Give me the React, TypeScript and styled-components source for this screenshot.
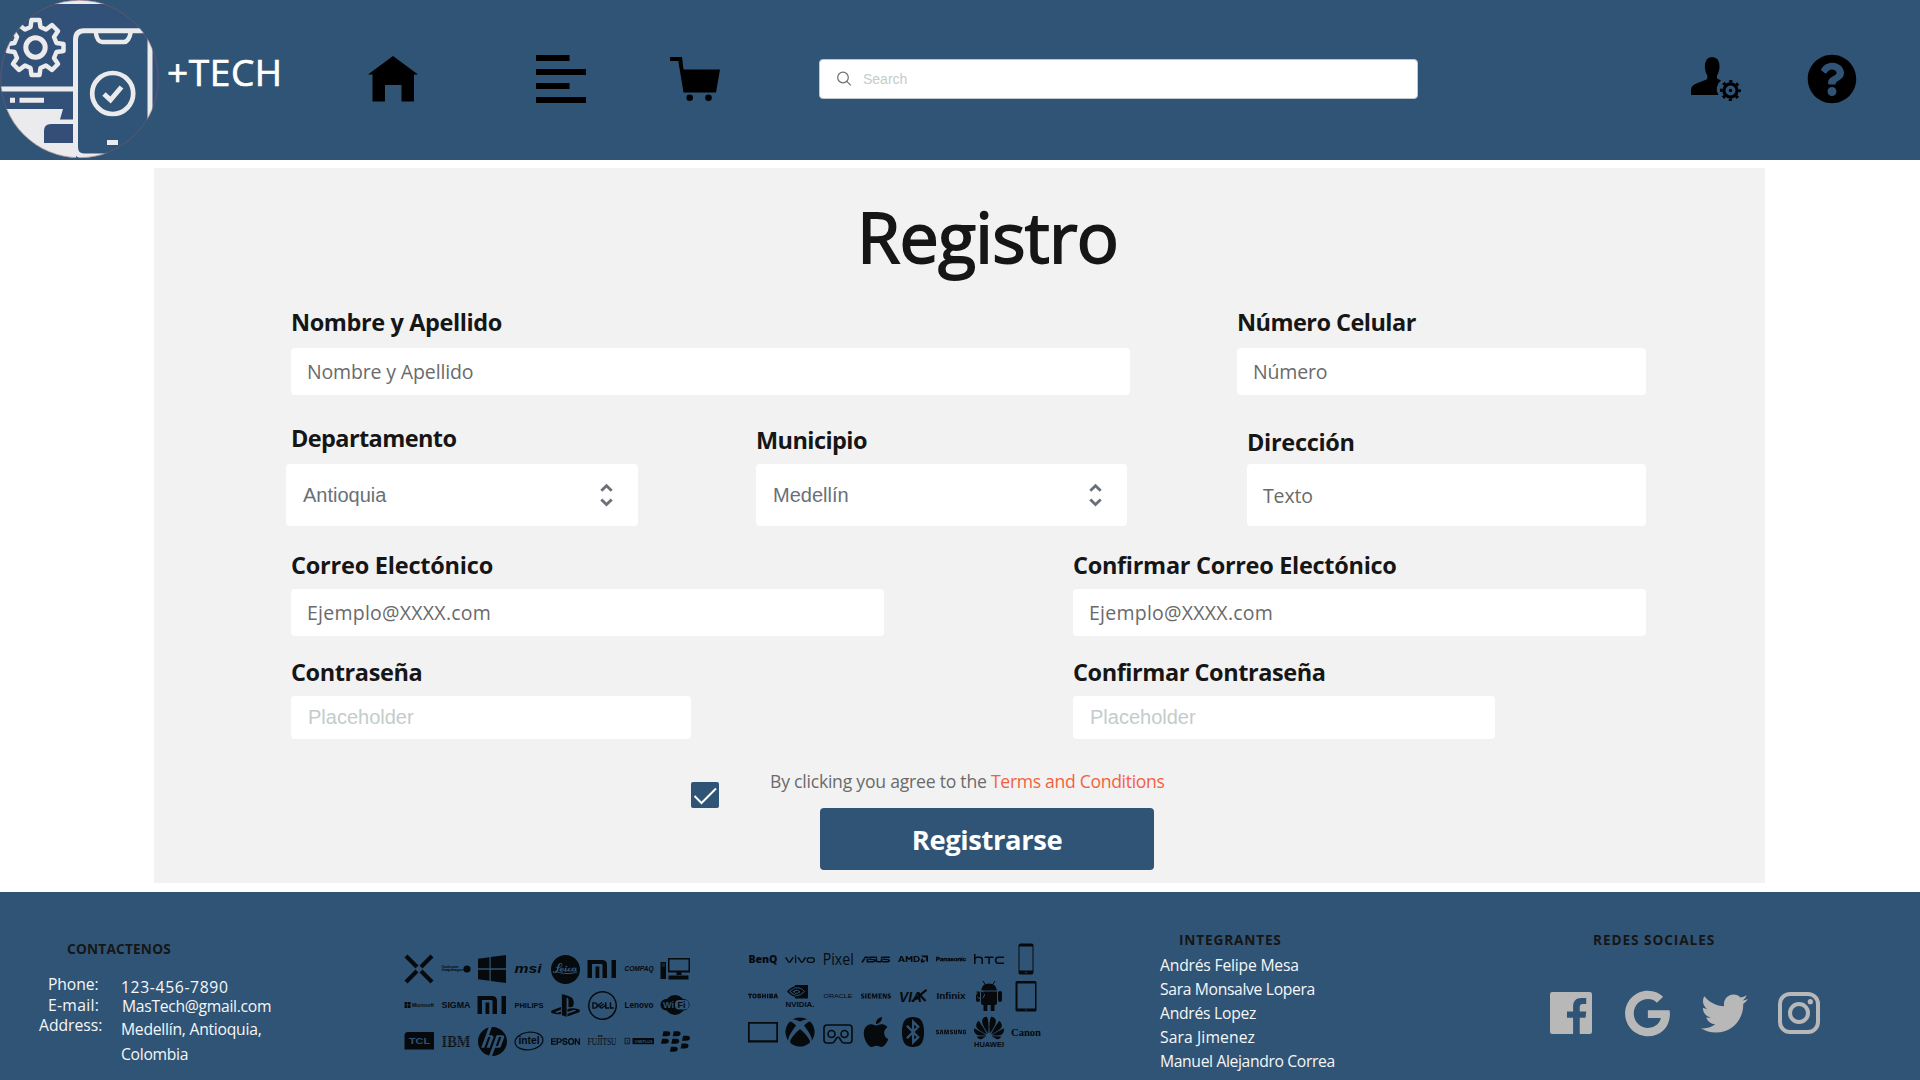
import React from 'react';
import styled, { createGlobalStyle } from 'styled-components';
import { FaWindows, FaXbox, FaQuestionCircle, FaTwitter, FaGoogle } from 'react-icons/fa';
import {
  SiDell, SiHp, SiHuawei, SiBlackberry, SiAsus, SiNvidia, SiPlaystation, SiApple, SiBluetooth,
  SiAmd, SiSamsung, SiEpson, SiVivo, SiPanasonic, SiHtc, SiToshiba, SiSiemens, SiLeica,
} from 'react-icons/si';

const blue = '#305475';
const sans = '"Open Sans", "Noto Sans", sans-serif';
const arial = '"Liberation Sans", Arial, sans-serif';

const GlobalStyle = createGlobalStyle`
  * { box-sizing: border-box; }
  body { margin: 0; background: #fff; font-family: ${sans}; color: #161616; }
`;

const Page = styled.div`
  display: flex;
  flex-direction: column;
  width: 1920px;
  height: 1080px;
  overflow: hidden;
`;

/* Header */

const Header = styled.header`
  display: flex;
  align-items: center;
  height: 160px;
  padding-bottom: 2px;
  background: ${blue};
`;

const Brand = styled.div`
  display: flex;
  align-items: center;
  width: 368px;
`;

const BrandName = styled.span`
  margin: 0 0 14px 7px;
  font-size: 37px;
  font-weight: 500;
  line-height: 48px;
  letter-spacing: 0.6px;
  color: #fff;
  -webkit-text-stroke: 0.7px #fff;
`;

const Nav = styled.nav`
  display: flex;
  align-items: center;
  width: 451px;
`;

const NavIcon = styled.svg<{ $after?: number }>`
  width: 50px;
  height: 50px;
  flex: none;
  margin-right: ${(p) => p.$after ?? 0}px;
`;

const SearchBox = styled.div`
  display: flex;
  align-items: center;
  gap: 11px;
  width: 599px;
  height: 40px;
  padding-left: 17px;
  border: 1px solid #c1c7cd;
  border-radius: 4px;
  background: #fff;
  font: 14px ${arial};
  color: #c3cccc;
`;

const Account = styled.div`
  display: flex;
  align-items: center;
  gap: 66px;
  margin-left: 273px;
  font-size: 50px;
  color: #000;
`;

/* Form */

const Panel = styled.form`
  width: 1611px;
  height: 715px;
  margin: 8px 0 9px 154px;
  padding-top: 20px;
  background: #f2f2f2;
`;

const Title = styled.h1`
  margin: 0;
  padding-left: 703px;
  font-size: 70px;
  font-weight: 500;
  line-height: 97px;
  height: 96px;
  letter-spacing: -0.75px;
  -webkit-text-stroke: 1.8px #161616;
`;

const Row = styled.div<{ $top: number; $indent?: number }>`
  display: flex;
  align-items: flex-end;
  margin-top: ${(p) => p.$top}px;
  padding-left: ${(p) => p.$indent ?? 137}px;
`;

const Field = styled.div<{ $width: number; $before?: number }>`
  width: ${(p) => p.$width}px;
  margin-left: ${(p) => p.$before ?? 0}px;
`;

const Label = styled.label<{ $gap: number; $ls: number; $shift?: number }>`
  display: block;
  margin: 0 0 ${(p) => p.$gap}px ${(p) => p.$shift ?? 0}px;
  font-size: 23.5px;
  font-weight: 700;
  line-height: 30px;
  letter-spacing: ${(p) => p.$ls}px;
  white-space: nowrap;
`;

const Box = styled.div<{ $height: number }>`
  display: flex;
  align-items: center;
  height: ${(p) => p.$height}px;
  padding-left: 16px;
  border-radius: 4px;
  background: #fff;
  font-size: 19.5px;
  letter-spacing: -0.15px;
  color: #6a6a6a;
`;

const EmailBox = styled(Box)`
  letter-spacing: 0.25px;
`;

const SelectBox = styled(Box)`
  justify-content: space-between;
  padding: 0 25px 0 17px;
  font: 20px ${arial};
  letter-spacing: 0;
  color: #697077;
`;

const PasswordBox = styled(Box)`
  padding-left: 17px;
  font: 20px ${arial};
  letter-spacing: 0;
  color: #c3cccc;
`;

const TermsRow = styled.div`
  display: flex;
  align-items: flex-start;
  height: 39px;
  margin-top: 30px;
  padding-left: 537px;
`;

const Check = styled.span`
  display: flex;
  width: 28px;
  height: 26px;
  margin: 13px 51px 0 0;
  border-radius: 2px;
  background: ${blue};
`;

const Terms = styled.span`
  font-size: 17.6px;
  line-height: 24px;
  letter-spacing: -0.23px;
  color: #6a6a6a;
  white-space: pre;
`;

const TermsLink = styled.a`
  letter-spacing: -0.32px;
  color: #f2613f;
`;

const Submit = styled.button`
  display: block;
  width: 334px;
  height: 62px;
  margin: 0 0 0 666px;
  padding: 0;
  border: 0;
  border-radius: 4px;
  background: ${blue};
  color: #fff;
  font: 700 27.4px ${sans};
  letter-spacing: -0.4px;
`;

/* Footer */

const Footer = styled.footer`
  display: flex;
  align-items: flex-start;
  height: 188px;
  background: ${blue};
`;

const Column = styled.section<{ $width: number; $top: number }>`
  flex: none;
  width: ${(p) => p.$width}px;
  padding-top: ${(p) => p.$top}px;
`;

const Heading = styled.h2<{ $indent: number; $ls: number }>`
  margin: 0;
  padding-left: ${(p) => p.$indent}px;
  font-size: 13.7px;
  font-weight: 700;
  line-height: 20px;
  letter-spacing: ${(p) => p.$ls}px;
`;

const Contact = styled.div`
  display: flex;
  margin-top: 15px;
`;

const Lines = styled.div<{ $width?: number; $top?: number }>`
  width: ${(p) => (p.$width ? `${p.$width}px` : 'auto')};
  padding-top: ${(p) => p.$top ?? 0}px;
`;

const Line = styled.p<{ $h: number; $indent?: number; $ls?: number }>`
  margin: 0;
  padding-left: ${(p) => p.$indent ?? 0}px;
  font-size: 15.7px;
  line-height: ${(p) => p.$h}px;
  letter-spacing: ${(p) => p.$ls ?? 0}px;
  color: #f6f7f8;
  white-space: nowrap;
`;

const BrandGrid = styled.div<{ $col: number; $row: number }>`
  display: grid;
  grid-template-columns: repeat(8, ${(p) => p.$col}px);
  grid-auto-rows: ${(p) => p.$row}px;
  place-items: center;
  color: #060a0d;
  font-size: 30px;
`;

const Mark = styled.svg`
  display: block;
  width: 30px;
  height: 30px;
  overflow: visible;
  fill: currentColor;
`;

const Socials = styled.div`
  display: flex;
  align-items: center;
  height: 48px;
  margin-top: 39px;
  color: #b8b8b8;
`;

const SocialIcon = styled.span<{ $size: number; $after: number }>`
  display: flex;
  margin-right: ${(p) => p.$after}px;
  font-size: ${(p) => p.$size}px;
`;

function BrandLogo() {
  return (
    <svg width="160" height="158" viewBox="0 0 160 158">
      <defs>
        <clipPath id="disc"><circle cx="79.5" cy="79" r="79" /></clipPath>
      </defs>
      <g clipPath="url(#disc)" fill="none" stroke="#ebebed" strokeWidth="5">
        <rect width="160" height="158" fill="#325178" stroke="none" />
        <rect width="160" height="4" fill="#ebebed" stroke="none" />
        <rect x="0" y="109" width="76" height="49" fill="#ebebed" stroke="none" />
        <path d="M63 109L60 119.500H74V109Z" fill="#344e78" stroke="none" />
        <path d="M51 124H74V143H44V131Q44 124 51 124Z" fill="#344e78" stroke="none" />
        <path d="M0 89H74" />
        <path d="M10 100.300H15M19.500 100.300H44" />
        <path d="M150 30.700H84Q75.500 30.700 75.500 40V147Q75.500 156 84 156H150Z" fill="#2f5477" />
        <path d="M95.500 31Q97 42 102 42H124Q129 42 131 31" strokeWidth="4.500" />
        <circle cx="112.700" cy="93.500" r="20.500" strokeWidth="4.700" />
        <path d="M104 94L110.500 100L121.500 87" strokeWidth="5" />
        <path d="M107 142.500H118" />
        <circle cx="35.500" cy="47.500" r="9.700" />
        <path
          strokeWidth="4.500"
          strokeLinejoin="round"
          d="M31.500 20H39.500L40.500 27L46 29.500L52 25L58 31L54 37L56.500 43L63.500 44V51L56.500 52L54 58L58 64L52 70L46 65.500L40.500 68L39.500 75H31.500L30.500 68L25 65.500L19 70L13 64L17 58L14.500 52L7.500 51V44L14.500 43L17 37L13 31L19 25L25 29.500L30.500 27Z"
        />
      </g>
      <circle cx="79.500" cy="79" r="78.700" fill="none" stroke="#8b5a66" strokeWidth=".5" />
    </svg>
  );
}

function Chevrons() {
  return (
    <svg width="13" height="24" viewBox="0 0 13 24" fill="none" stroke="#697077" strokeWidth="2.800">
      <path d="M1.300 7.800L6.500 2.800L11.700 7.800M1.300 16.500L6.500 21.500L11.700 16.500" />
    </svg>
  );
}

type WordProps = {
  children: string; size: number; w?: number; x?: number; y?: number;
  weight?: number; italic?: boolean; family?: string; fill?: string;
};

function Word({ children, size, w = 29, x = 0.5, y, weight = 700, italic, family, fill }: WordProps) {
  return (
    <text
      x={x}
      y={y ?? 15 + size * 0.36}
      fontSize={size}
      fontWeight={weight}
      fontStyle={italic ? 'italic' : 'normal'}
      fontFamily={family ?? 'Liberation Sans'}
      textLength={w}
      lengthAdjust="spacingAndGlyphs"
      fill={fill ?? 'currentColor'}
    >
      {children}
    </text>
  );
}

function MiMark() {
  return (
    <Mark viewBox="0 0 30 30">
      <path d="M.5 6H15Q20 6 20 11V24H15.500V11Q15.500 10 14.500 10H5V24H.5ZM8.500 12.500H12.300V24H8.500ZM24.500 6H29V24H24.500Z" />
    </Mark>
  );
}

function LogosLeft() {
  return (
    <BrandGrid $col={36.6} $row={36}>
      <Mark viewBox="0 0 30 30">
        <path d="M2 2L13 13M28 2L17 13M2 28L13 17M28 28L17 17" stroke="currentColor" strokeWidth="4.200" />
      </Mark>
      <Mark viewBox="0 0 30 30">
        <Word size={3.6} w={17} y={14}>Qualcomm</Word>
        <Word size={3.8} w={22} y={17.300}>snapdragon</Word>
        <circle cx="26" cy="15" r="3.600" />
      </Mark>
      <FaWindows size={32} />
      <Mark viewBox="0 0 30 30"><Word size={13} w={27} y={18.800} italic>msi</Word></Mark>
      <SiLeica size={29} />
      <MiMark />
      <Mark viewBox="0 0 30 30"><Word size={6.800} italic>COMPAQ</Word></Mark>
      <Mark viewBox="0 0 30 30">
        <path d="M.5 8H6V25H.5ZM8 4H30V18.500H8ZM16.500 18.500H21.500V21H16.500ZM8.500 21.500H28.500V25.500H8.500Z" />
        <path d="M9.500 5.500H28.500V16.500H9.500Z" fill={blue} />
        <path d="M1.500 10H5M1.500 12H5" stroke={blue} strokeWidth=".6" />
      </Mark>

      <Mark viewBox="0 0 30 30">
        <path d="M.5 12H3.300V14.800H.5ZM3.800 12H6.600V14.800H3.800ZM.5 15.300H3.300V18.100H.5ZM3.800 15.300H6.600V18.100H3.800Z" />
        <Word size={5.6} x={8} w={22}>Microsoft</Word>
      </Mark>
      <Mark viewBox="0 0 30 30"><Word size={9}>SIGMA</Word></Mark>
      <MiMark />
      <Mark viewBox="0 0 30 30"><Word size={7.8} weight={800}>PHILIPS</Word></Mark>
      <SiPlaystation size={29} />
      <SiDell size={29} />
      <Mark viewBox="0 0 30 30"><Word size={8.500}>Lenovo</Word></Mark>
      <Mark viewBox="0 0 30 30">
        <circle cx="15" cy="15" r="10" />
        <rect x=".5" y="9" width="29" height="11.500" rx="5.700" />
        <rect x="15" y="10" width="13.800" height="9.500" rx="4" fill={blue} />
        <Word size={9} x={3} w={11} y={18.200} fill={blue}>Wi</Word>
        <Word size={9} x={17.500} w={8} y={18.200}>Fi</Word>
      </Mark>

      <Mark viewBox="0 0 30 30">
        <path d="M4 6H30V23.500H.5V9.500Q.5 6 4 6Z" />
        <Word size={9} x={5} w={21} y={18} fill={blue}>TCL</Word>
      </Mark>
      <Mark viewBox="0 0 30 30">
        <Word size={16} y={20.500} family="Liberation Serif">IBM</Word>
        <path d="M0 11.300H30M0 13.300H30M0 15.300H30M0 17.300H30M0 19.300H30" stroke={blue} strokeWidth=".6" />
      </Mark>
      <SiHp size={29} />
      <Mark viewBox="0 0 30 30">
        <ellipse cx="15" cy="15" rx="14" ry="8.800" fill="none" stroke="currentColor" strokeWidth="1.200" transform="rotate(-7 15 15)" />
        <Word size={10} x={4.500} w={21} y={17.500}>intel</Word>
      </Mark>
      <SiEpson size={29} />
      <Mark viewBox="0 0 30 30">
        <Word size={10.500} weight={400} family="Liberation Serif" y={19}>FUJITSU</Word>
        <path d="M11.500 11Q11 8.500 13.300 10Q15.500 8.500 15 11" fill="none" stroke="currentColor" strokeWidth=".9" />
      </Mark>
      <Mark viewBox="0 0 30 30">
        <path d="M1 12.300H5.700V17.800H1Z" fill="none" stroke="currentColor" strokeWidth=".7" />
        <Word size={4} x={2.600} w={1.800} y={16.500}>1</Word>
        <path d="M8.500 12H30V18.200H8.500Z" />
        <Word size={4.200} x={10.500} w={18} y={16.600} fill={blue}>ONEPLUS</Word>
      </Mark>
      <SiBlackberry size={29} />
    </BrandGrid>
  );
}

function LogosRight() {
  return (
    <BrandGrid $col={37.65} $row={36.5}>
      <Mark viewBox="0 0 30 30"><Word size={10.500} family="Open Sans" weight={800}>BenQ</Word></Mark>
      <SiVivo size={30} />
      <Mark viewBox="0 0 30 30"><Word size={16} w={31} x={-0.3} y={21} weight={400} family="Open Sans">Pixel</Word></Mark>
      <SiAsus size={29} />
      <SiAmd size={30} />
      <SiPanasonic size={30} />
      <SiHtc size={30} />
      <Mark viewBox="0 0 30 30">
        <path fillRule="evenodd" d="M9.500 -.5H20.500Q22.500 -.5 22.500 1.500V28.500Q22.500 30.500 20.500 30.500H9.500Q7.500 30.500 7.500 28.500V1.500Q7.500 -.5 9.500 -.5ZM8.500 2.500V26.500H21.500V2.500Z" />
        <circle cx="15" cy="28.500" r=".8" fill={blue} />
      </Mark>

      <SiToshiba size={30} />
      <Mark viewBox="0 0 30 30">
        <path d="M10 4H23V17.500H10Z" />
        <path d="M3 10.500Q12 1 19.500 10.500Q12 20 3 10.500ZM6.500 10.500Q12 5 16.500 10.500Q12 15.500 6.500 10.500Z" fill="none" stroke="currentColor" strokeWidth="1.600" />
        <path d="M10 7Q16 6 19.500 10.500Q16 14.500 10 15M10 9.500Q13 8.500 15 10.800Q13 12.500 10 12.500" fill="none" stroke={blue} strokeWidth="1" />
        <Word size={7.500} y={25.700}>NVIDIA.</Word>
      </Mark>
      <Mark viewBox="0 0 30 30"><Word size={5.400} weight={400}>ORACLE</Word></Mark>
      <SiSiemens size={30} />
      <Mark viewBox="0 0 30 30">
        <Word size={15.500} x={1} w={23} y={20.500} italic>VIA</Word>
        <path d="M14 20.500L28.500 8.800M20 12L27.500 20" stroke="currentColor" strokeWidth="2.200" />
      </Mark>
      <Mark viewBox="0 0 30 30"><Word size={8.500}>Infinix</Word></Mark>
      <Mark viewBox="0 0 30 30">
        <path d="M7 9.500Q8 2.500 15 2.500Q22 2.500 23 9.500ZM7 10.500H23V22Q23 24 21 24H9Q7 24 7 22ZM9.500 23H13.300V30H9.500ZM16.700 23H20.500V30H16.700ZM2 12Q2 10 4 10T6 12V19Q6 21 4 21T2 19ZM24 12Q24 10 26 10T28 12V19Q28 21 26 21T24 19Z" />
        <path d="M9 0L11.500 4M21 0L18.500 4" stroke="currentColor" strokeWidth="1" />
        <circle cx="6.500" cy="13.500" r="4" fill="none" stroke="#4a5560" strokeWidth="1" strokeDasharray="4 2" />
      </Mark>
      <Mark viewBox="0 0 30 30">
        <path fillRule="evenodd" d="M6 0H24Q25.500 0 25.500 1.500V29Q25.500 30.500 24 30.500H6Q4.500 30.500 4.500 29V1.500Q4.500 0 6 0ZM6.500 2.500V27.500H24V2.500Z" />
        <circle cx="15" cy="29" r=".7" fill={blue} />
      </Mark>

      <Mark viewBox="0 0 30 30">
        <path fillRule="evenodd" d="M0 5H30V25.500H0ZM1.700 6.700V23.300H28.300V6.700Z" />
      </Mark>
      <FaXbox size={30} />
      <Mark viewBox="0 0 30 30">
        <g fill="none" stroke="currentColor" strokeWidth="1.600">
          <path d="M4 8H26Q29 8 29 11V23Q29 26 26 26H21Q19 26 18 23.500L16.500 21Q15 19.500 13.500 21L12 23.500Q11 26 9 26H4Q1 26 1 23V11Q1 8 4 8Z" />
          <circle cx="8.500" cy="17" r="3.500" />
          <circle cx="21.500" cy="17" r="3.500" />
        </g>
      </Mark>
      <SiApple size={30} />
      <SiBluetooth size={30} />
      <SiSamsung size={30} />
      <Mark viewBox="0 0 30 30">
        <SiHuawei size={30} x={0} y={-4} />
        <path d="M0 24H30V30H0Z" fill={blue} />
        <Word size={6.500} y={29.500} w={30} x={0}>HUAWEI</Word>
      </Mark>
      <Mark viewBox="0 0 30 30"><Word size={10.500} w={30} x={0} family="Liberation Serif">Canon</Word></Mark>
    </BrandGrid>
  );
}

export default function App() {
  return (
    <Page>
      <GlobalStyle />
      <Header>
        <Brand>
          <BrandLogo />
          <BrandName>+TECH</BrandName>
        </Brand>
        <Nav>
          <NavIcon $after={118} viewBox="0 0 50 50">
            <path d="M25 2L50 20.500H46V47.500H33.500V31H17V47.500H4.500V20.500H0Z" />
          </NavIcon>
          <NavIcon $after={84} viewBox="0 0 50 50">
            <path d="M0 1H33.500V7H0ZM0 15H50V21H0ZM0 29H33.500V35H0ZM0 43H50V49H0Z" />
          </NavIcon>
          <NavIcon viewBox="0 0 50 50">
            <path d="M0 3H12L13.500 15.500H50L46 38.500H13.500L8.300 7H0Z" />
            <circle cx="19.700" cy="43.700" r="3.300" />
            <circle cx="38.500" cy="43.700" r="3.300" />
          </NavIcon>
        </Nav>
        <SearchBox>
          <svg width="15" height="16" viewBox="0 0 15 16" fill="none" stroke="#697077" strokeWidth="1.200">
            <circle cx="6" cy="6.500" r="5.300" />
            <path d="M9.800 10.300L13.800 14.300" />
          </svg>
          Search
        </SearchBox>
        <Account>
          <NavIcon viewBox="0 0 50 50">
            <path d="M21 3Q28.500 3 28.500 13Q28 19 26 21.500V24.500L30 26.500A10.500 10.500 0 0 0 27.500 41H0V35Q1 31 6 29.300L15.500 25.500L16.300 24.500V21.500Q14 18 13.800 13Q14 3 21 3Z" />
            <circle cx="39.500" cy="36.500" r="6.600" fill="none" stroke="#000" strokeWidth="3.200" />
            <circle cx="39.500" cy="36.500" r="9.200" fill="none" stroke="#000" strokeWidth="2.500" strokeDasharray="3.200 4.026" strokeDashoffset="1.600" />
            <circle cx="39.500" cy="36.500" r="1.700" />
          </NavIcon>
          <FaQuestionCircle />
        </Account>
      </Header>

      <Panel>
        <Title>Registro</Title>
        <Row $top={23}>
          <Field $width={839}>
            <Label $gap={11} $ls={-0.4}>Nombre y Apellido</Label>
            <Box $height={47}>Nombre y Apellido</Box>
          </Field>
          <Field $width={409} $before={107}>
            <Label $gap={11} $ls={-0.54}>Número Celular</Label>
            <Box $height={47}>Número</Box>
          </Field>
        </Row>
        <Row $top={28} $indent={132}>
          <Field $width={352}>
            <Label $gap={11} $ls={-0.6} $shift={5}>Departamento</Label>
            <SelectBox $height={62}>Antioquia<Chevrons /></SelectBox>
          </Field>
          <Field $width={371} $before={118}>
            <Label $gap={9} $ls={-0.58}>Municipio</Label>
            <SelectBox $height={62}>Medellín<Chevrons /></SelectBox>
          </Field>
          <Field $width={399} $before={120}>
            <Label $gap={7} $ls={-0.3}>Dirección</Label>
            <Box $height={62}>Texto</Box>
          </Field>
        </Row>
        <Row $top={24}>
          <Field $width={593}>
            <Label $gap={9} $ls={-0.22}>Correo Electónico</Label>
            <EmailBox $height={47}>Ejemplo@XXXX.com</EmailBox>
          </Field>
          <Field $width={573} $before={189}>
            <Label $gap={9} $ls={-0.3}>Confirmar Correo Electónico</Label>
            <EmailBox $height={47}>Ejemplo@XXXX.com</EmailBox>
          </Field>
        </Row>
        <Row $top={21}>
          <Field $width={400}>
            <Label $gap={9} $ls={-0.4}>Contraseña</Label>
            <PasswordBox $height={43}>Placeholder</PasswordBox>
          </Field>
          <Field $width={422} $before={382}>
            <Label $gap={9} $ls={-0.44}>Confirmar Contraseña</Label>
            <PasswordBox $height={43}>Placeholder</PasswordBox>
          </Field>
        </Row>
        <TermsRow>
          <Check>
            <svg width="28" height="26" viewBox="0 0 28 26" fill="none" stroke="#fff" strokeWidth="2">
              <path d="M3.500 14L10.500 21L25 6.500" />
            </svg>
          </Check>
          <Terms>By clicking you agree to the <TermsLink>Terms and Conditions</TermsLink></Terms>
        </TermsRow>
        <Submit type="button">Registrarse</Submit>
      </Panel>

      <Footer>
        <Column $width={401} $top={47}>
          <Heading $indent={67} $ls={0.18}>CONTACTENOS</Heading>
          <Contact>
            <Lines $width={121}>
              <Line $h={21} $indent={48} $ls={-0.1}>Phone:</Line>
              <Line $h={21} $indent={48} $ls={0.3}>E-mail:</Line>
              <Line $h={19} $indent={39}>Address:</Line>
            </Lines>
            <Lines $top={3}>
              <Line $h={20} $ls={0.65}>123-456-7890</Line>
              <Line $h={19} $indent={1} $ls={-0.3}>MasTech@gmail.com</Line>
              <Line $h={27} $ls={-0.25}>Medellín, Antioquia,</Line>
              <Line $h={22} $ls={-0.3}>Colombia</Line>
            </Lines>
          </Contact>
        </Column>
        <Column $width={343} $top={59}><LogosLeft /></Column>
        <Column $width={416} $top={49}><LogosRight /></Column>
        <Column $width={390} $top={38}>
          <Heading $indent={19} $ls={0.8}>INTEGRANTES</Heading>
          <Lines $top={3}>
            <Line $h={24} $ls={-0.2}>Andrés Felipe Mesa</Line>
            <Line $h={24} $ls={-0.34}>Sara Monsalve Lopera</Line>
            <Line $h={24} $ls={-0.26}>Andrés Lopez</Line>
            <Line $h={24} $ls={0.1}>Sara Jimenez</Line>
            <Line $h={24} $ls={-0.36}>Manuel Alejandro Correa</Line>
          </Lines>
        </Column>
        <Column $width={370} $top={38}>
          <Heading $indent={43} $ls={0.9}>REDES SOCIALES</Heading>
          <Socials>
            <SocialIcon $size={42} $after={32}>
              <svg width="1em" height="1em" viewBox="4 4 24 24" fill="currentColor">
                <path d="M26.670 4H5.330A1.340 1.340 0 0 0 4 5.330V26.670A1.340 1.340 0 0 0 5.330 28H17.200V18.720H13.700V15.090H17.200V12.420C17.200 9.320 18.900 7.400 21.700 7.400H24.700V10.800H22.800C21.300 10.800 21 11.700 21 12.780V15.090H24.700L24.300 18.720H21V28H26.670A1.340 1.340 0 0 0 28 26.670V5.330A1.340 1.340 0 0 0 26.670 4Z" />
              </svg>
            </SocialIcon>
            <SocialIcon $size={47} $after={30}><FaGoogle /></SocialIcon>
            <SocialIcon $size={47} $after={30}><FaTwitter /></SocialIcon>
            <SocialIcon $size={42} $after={0}>
              <svg width="1em" height="1em" viewBox="0 0 42 42" fill="none" stroke="currentColor">
                <rect x="2" y="2" width="38" height="38" rx="10" strokeWidth="4" />
                <circle cx="21" cy="21" r="9" strokeWidth="4" />
                <circle cx="32.300" cy="9.700" r="2.600" fill="currentColor" stroke="none" />
              </svg>
            </SocialIcon>
          </Socials>
        </Column>
      </Footer>
    </Page>
  );
}
